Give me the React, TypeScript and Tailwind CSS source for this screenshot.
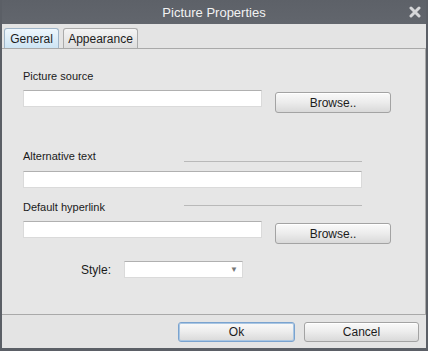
import React from "react"

function Field({ width }: { width: string }) {
  return (
    <div
      className={`${width} h-[17px] bg-white border border-[#dadada] border-t-[#b0b0b0]`}
    />
  )
}

function Button({ label, focused }: { label: string; focused?: boolean }) {
  return (
    <div
      className={`flex-1 flex items-center justify-center rounded-[3px] border bg-gradient-to-b from-[#fafafa] via-[#ececec] to-[#d9d9d9] text-[12px] text-[#1c1c1c] ${
        focused
          ? "border-[#7aa3cf] shadow-[inset_0_0_0_1px_#a9c6e3]"
          : "border-[#a3a3a3] shadow-[inset_0_1px_0_#ffffff]"
      }`}
    >
      {label}
    </div>
  )
}

export default function App() {
  return (
    <div
      className="w-[428px] h-[351px] bg-[#5b5f66] flex flex-col px-[2px] pb-[3px] overflow-hidden"
      style={{ fontFamily: '"Liberation Sans", Arial, sans-serif' }}
    >
      {/* title bar */}
      <div className="relative h-[24px] flex items-center justify-center bg-gradient-to-b from-[#5d6168] to-[#62666d]">
        <span className="text-[13px] text-[#f2f2f2] pt-[1px]">Picture Properties</span>
        <svg
          className="absolute right-[5px] top-[6px]"
          width="12"
          height="12"
          viewBox="0 0 12 12"
        >
          <path
            d="M2 2 L10 10 M10 2 L2 10"
            stroke="#d6d7d9"
            strokeWidth="3"
            strokeLinecap="round"
          />
        </svg>
      </div>

      <div className="flex-1 flex flex-col bg-[#e4e4e4]">
        {/* tabs */}
        <div className="flex items-end gap-[4px] pl-[2px] pt-[4px] h-[24px] text-[12px] text-[#1c1c1c]">
          <div className="w-[55px] h-[20px] flex items-center justify-center rounded-t-[3px] border border-b-0 border-[#9fb4c7] bg-gradient-to-b from-[#eef6fc] to-[#cde4f4]">
            General
          </div>
          <div className="w-[75px] h-[20px] flex items-center justify-center rounded-t-[3px] border border-b-0 border-[#ababab] bg-gradient-to-b from-[#f4f4f4] to-[#dedede]">
            Appearance
          </div>
        </div>

        {/* panel */}
        <div className="h-[267px] border-t border-r border-b border-[#a9a9a9] bg-[#e6e6e6] pl-[21px] pt-[21px] text-[11px] text-[#1a1a1a]">
          <div className="h-[13px] leading-[13px]">Picture source</div>
          <div className="flex items-start mt-[7px]">
            <Field width="w-[239px]" />
            <div className="ml-[13px] mt-[2px] w-[116px] h-[21px] flex flex-col">
              <Button label="Browse.." />
            </div>
          </div>

          <div className="flex items-start mt-[37px] h-[13px] leading-[13px]">
            <span className="w-[161px]">Alternative text</span>
            <div className="mt-[11px] w-[178px] h-px bg-[#b9b9b9]" />
          </div>
          <div className="mt-[8px]">
            <Field width="w-[339px]" />
          </div>

          <div className="flex items-start mt-[13px] h-[13px] leading-[13px]">
            <span className="w-[161px]">Default hyperlink</span>
            <div className="mt-[4px] w-[178px] h-px bg-[#b9b9b9]" />
          </div>
          <div className="flex items-start mt-[7px]">
            <Field width="w-[239px]" />
            <div className="ml-[13px] mt-[2px] w-[116px] h-[21px] flex flex-col">
              <Button label="Browse.." />
            </div>
          </div>

          <div className="flex items-center mt-[17px] h-[17px]">
            <span className="w-[88px] text-right text-[12px]">Style:</span>
            <div className="ml-[13px] w-[119px] h-[17px] bg-white border border-[#dadada] border-t-[#b0b0b0] flex items-center justify-end pr-[4px]">
              <span className="text-[8px] text-[#777]">▼</span>
            </div>
          </div>
        </div>

        {/* footer */}
        <div className="flex justify-end gap-[9px] pt-[7px] pr-[7px]">
          <div className="w-[117px] h-[20px] flex flex-col">
            <Button label="Ok" focused />
          </div>
          <div className="w-[115px] h-[20px] flex flex-col">
            <Button label="Cancel" />
          </div>
        </div>
      </div>
    </div>
  )
}
